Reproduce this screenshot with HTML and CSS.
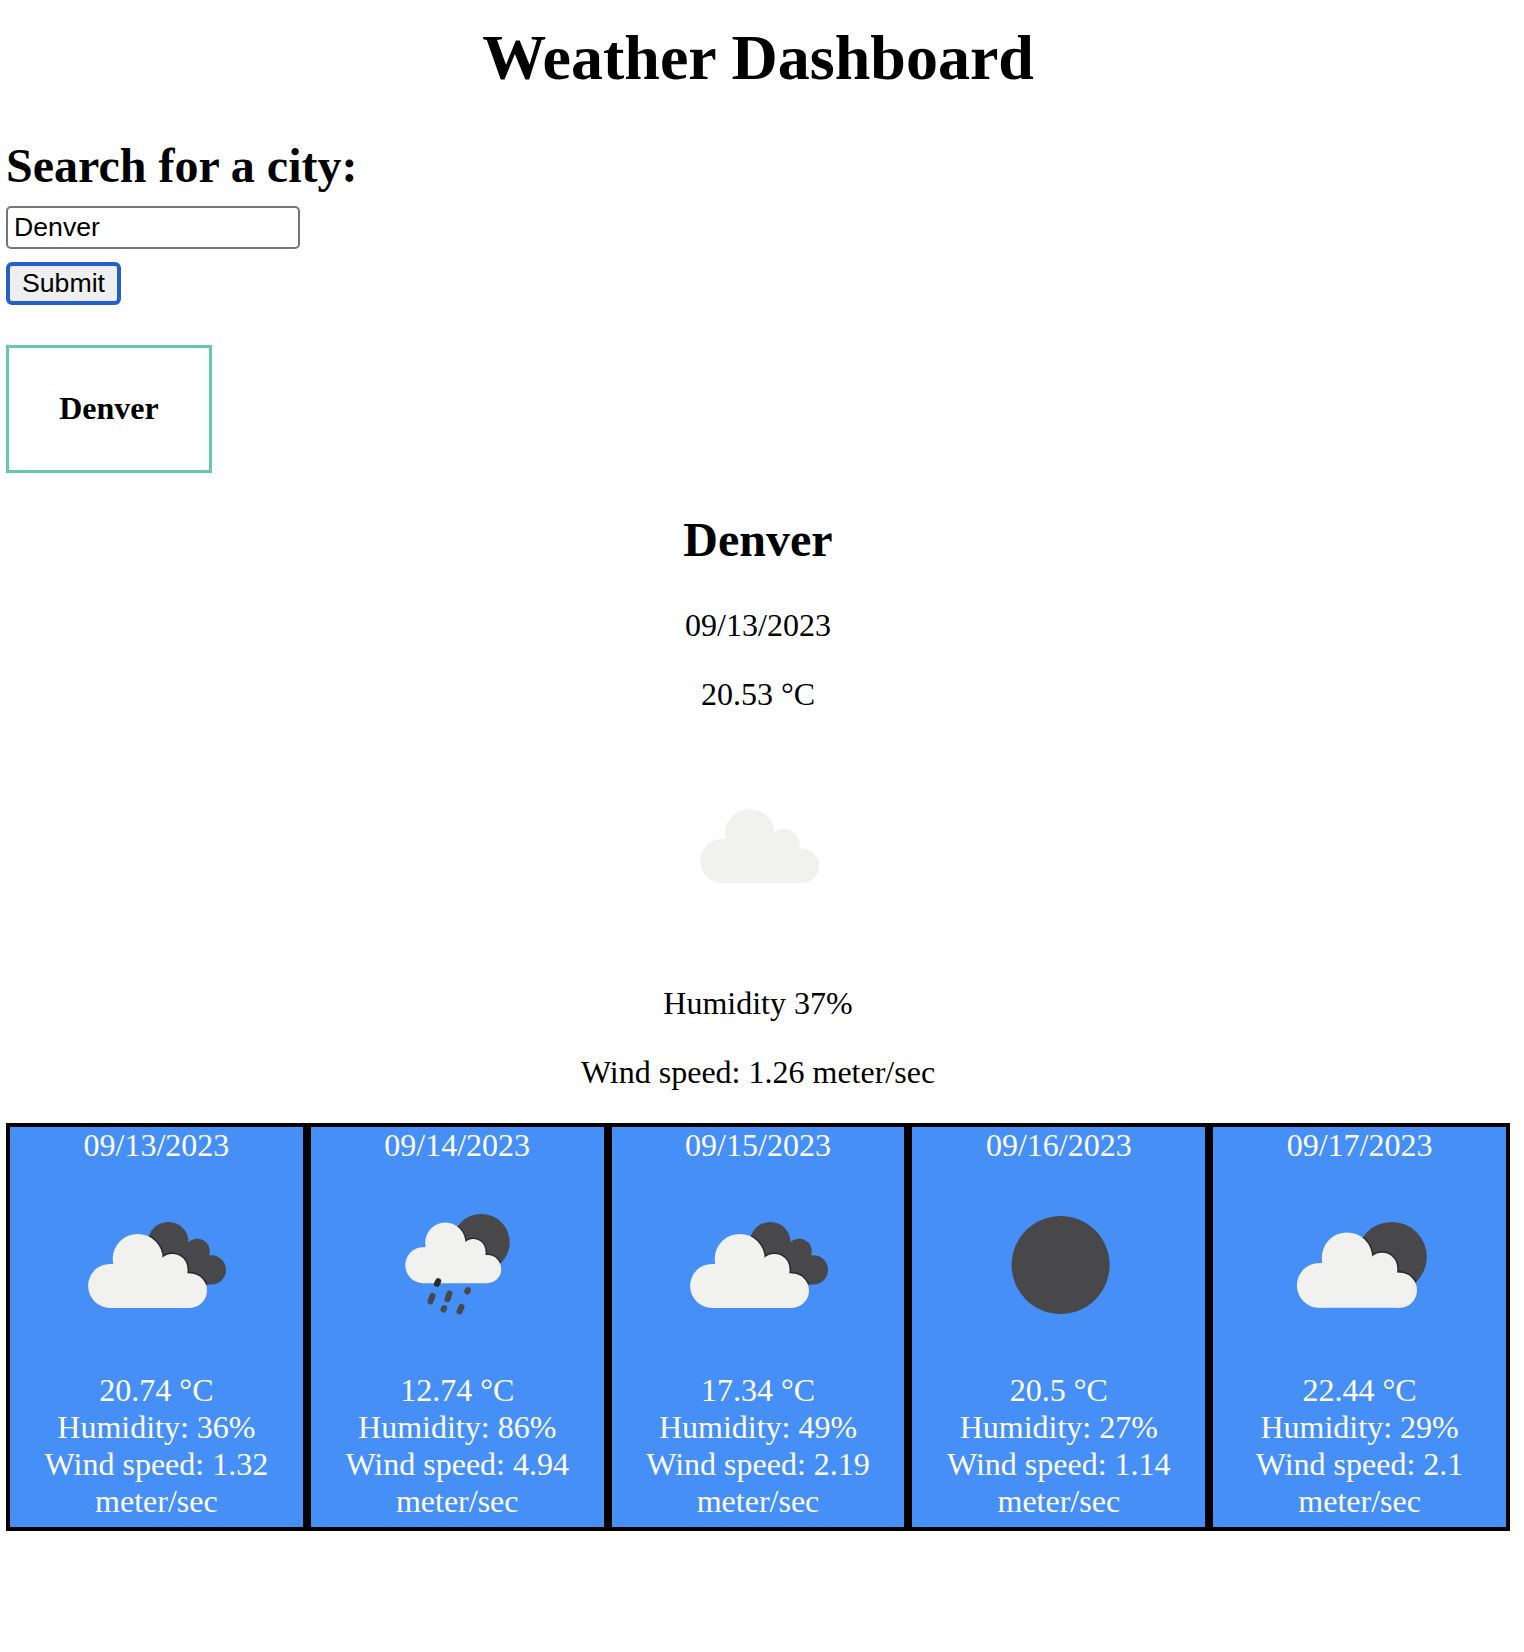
FILE: index.html
```html
<!DOCTYPE html>
<html lang="en">
<head>
<meta charset="utf-8">
<title>Weather Dashboard</title>
<link rel="stylesheet" href="styles.css">
</head>
<body>
<svg class="defs" width="0" height="0" aria-hidden="true">
  <defs>
    <g id="cloud">
      <circle cx="53.7" cy="121.7" r="22"/>
      <circle cx="81.3" cy="94.7" r="25"/>
      <circle cx="116" cy="104.7" r="15"/>
      <circle cx="133.4" cy="126.5" r="17.2"/>
      <path d="M53.7 143.7V99.7H120V104.7H131V109.3H133.4V143.7Z"/>
    </g>
    <g id="back-cloud">
      <circle cx="111.9" cy="77.9" r="20.2"/>
      <circle cx="140.8" cy="87" r="12.5"/>
      <circle cx="154.9" cy="105.7" r="14.7"/>
      <path d="M95 78H135L153 91V120.4H95Z"/>
    </g>
    <clipPath id="clip-back">
      <circle cx="111.9" cy="77.9" r="20.2"/>
      <circle cx="140.8" cy="87" r="12.5"/>
      <circle cx="154.9" cy="105.7" r="14.7"/>
      <path d="M95 78H135L153 91V120.4H95Z"/>
    </clipPath>
    <clipPath id="clip-moon"><circle cx="131.4" cy="92.7" r="35"/></clipPath>
    <clipPath id="clip-rain"><circle cx="123.8" cy="78.2" r="28.5"/></clipPath>
    <symbol id="broken-clouds" viewBox="0 0 200 200">
      <use href="#back-cloud" class="dark"/>
      <g clip-path="url(#clip-back)"><use href="#cloud" class="shade"/></g>
      <use href="#cloud" class="light"/>
    </symbol>
  </defs>
</svg>

<h1 class="title">Weather Dashboard</h1>

<form class="search">
  <h2 class="search-label">Search for a city:</h2>
  <input class="search-input" type="text" value="Denver" aria-label="City">
  <button class="search-button" type="button">Submit</button>
</form>

<div class="history"><h4 class="history-city">Denver</h4></div>

<section class="current">
  <h2 class="current-city">Denver</h2>
  <p>09/13/2023</p>
  <p>20.53 °C</p>
  <svg class="icon" viewBox="0 0 200 200"><use href="#cloud" class="light" transform="translate(10.5 -5.7)"/></svg>
  <p>Humidity 37%</p>
  <p>Wind speed: 1.26 meter/sec</p>
</section>

<section class="forecast">
  <article class="day">
    <div>09/13/2023</div>
    <svg class="icon" viewBox="-.4 -.2 200 200"><use href="#broken-clouds" width="200" height="200"/></svg>
    <div>20.74 °C</div>
    <div>Humidity: 36%</div>
    <div>Wind speed: 1.32 meter/sec</div>
  </article>
  <article class="day">
    <div>09/14/2023</div>
    <svg class="icon" viewBox="-.4 -.2 200 200">
      <circle class="dark" cx="123.8" cy="78.2" r="28.5"/>
      <g clip-path="url(#clip-rain)"><use href="#cloud" class="shade" transform="translate(22.3 1.2) scale(.807 .82)"/></g>
      <use href="#cloud" class="light" transform="translate(22.3 1.2) scale(.807 .82)"/>
      <path class="drops" d="M75.1 131.7L73.1 137.3M92.1 129.3L90.1 135M110.5 126L109.8 127.3M86.8 144L86.1 145.3M104.1 142.7L102.1 147.3"/>
      <path class="drops drop-near" d="M80.8 117L79.5 119.7"/>
    </svg>
    <div>12.74 °C</div>
    <div>Humidity: 86%</div>
    <div>Wind speed: 4.94 meter/sec</div>
  </article>
  <article class="day">
    <div>09/15/2023</div>
    <svg class="icon" viewBox="-.4 -.2 200 200"><use href="#broken-clouds" width="200" height="200"/></svg>
    <div>17.34 °C</div>
    <div>Humidity: 49%</div>
    <div>Wind speed: 2.19 meter/sec</div>
  </article>
  <article class="day">
    <div>09/16/2023</div>
    <svg class="icon" viewBox="-.4 -.2 200 200"><circle class="dark" cx="101.2" cy="100.8" r="49"/></svg>
    <div>20.5 °C</div>
    <div>Humidity: 27%</div>
    <div>Wind speed: 1.14 meter/sec</div>
  </article>
  <article class="day">
    <div>09/17/2023</div>
    <svg class="icon" viewBox="-.4 -.2 200 200">
      <circle class="dark" cx="131.4" cy="92.7" r="35"/>
      <g clip-path="url(#clip-moon)"><use href="#cloud" class="shade" transform="translate(4.5 -2.9) scale(1.01 1.02)"/></g>
      <use href="#cloud" class="light" transform="translate(4.5 -2.9) scale(1.01 1.02)"/>
    </svg>
    <div>22.44 °C</div>
    <div>Humidity: 29%</div>
    <div>Wind speed: 2.1 meter/sec</div>
  </article>
</section>
</body>
</html>
```
FILE: styles.css
```css
* {
  box-sizing: border-box;
}

body {
  margin: 0;
  padding: 21px 14px 0 6px;
  background: #fff;
  color: #000;
  font: 32px/37px "Liberation Serif", "Times New Roman", serif;
}

.defs {
  position: absolute;
}

.title {
  margin: 0 0 43px;
  font-size: 64px;
  line-height: 74px;
  text-align: center;
}

.search {
  display: flex;
  flex-direction: column;
  align-items: flex-start;
}

.search-label {
  margin: 0 0 13px;
  font-size: 48px;
  line-height: 55px;
}

.search-input,
.search-button {
  height: 43px;
  font: 26.67px/31px "Liberation Sans", Arial, sans-serif;
  color: #000;
}

.search-input {
  width: 294px;
  margin: 0 0 13px;
  padding: 2px 6px;
  border: 2px solid #767676;
  border-radius: 5px;
  background: #fff;
}

.search-button {
  width: 115px;
  padding: 0;
  border: 4px solid #2460cc;
  border-radius: 6px;
  background: #efefef;
}

.history {
  display: flex;
  align-items: center;
  justify-content: center;
  width: 206px;
  height: 128px;
  margin: 40px 0 39px;
  padding-bottom: 2px;
  border: 3px solid #68c8ab;
}

.history-city {
  margin: 0;
  font-size: 32px;
}

.current {
  text-align: center;
}

.current-city {
  margin: 0 0 40px;
  font-size: 48px;
  line-height: 55px;
}

.current p {
  margin: 0 0 32px;
}

.icon {
  display: block;
  width: 200px;
  height: 200px;
  margin: 0 auto 8px;
}

.current .icon {
  margin-bottom: 40px;
}

.forecast {
  display: grid;
  grid-template-columns: repeat(5, 1fr);
}

.day {
  height: 408px;
  border: 4px solid #000;
  background: #468ff7;
  color: #fff;
  text-align: center;
}

.light {
  fill: #f1f1ef;
}

.dark {
  fill: #48484a;
}

.shade {
  fill: #29292b;
  stroke: #29292b;
  stroke-width: 3;
}

.drops {
  fill: none;
  stroke: #48484a;
  stroke-width: 6;
  stroke-linecap: round;
}

.drop-near {
  stroke: #2b2b2d;
}
```
